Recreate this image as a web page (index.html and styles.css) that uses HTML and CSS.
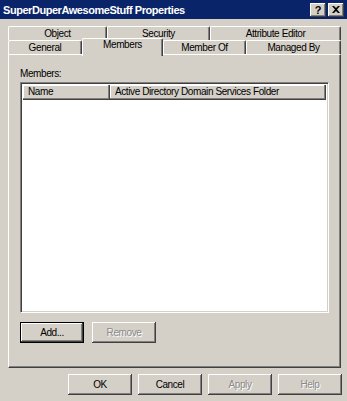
FILE: index.html
```html
<!DOCTYPE html>
<html>
<head>
<meta charset="utf-8">
<link rel="stylesheet" href="styles.css">
</head>
<body>
<div class="window">
  <div class="titlebar">
    <span class="title">SuperDuperAwesomeStuff Properties</span>
    <div class="tbtns">
      <span class="tbtn">?</span>
      <span class="tbtn close"><svg width="8" height="7" viewBox="0 0 8 7"><path d="M0 0h2l2 2 2-2h2L5 3.5 8 7H6L4 5 2 7H0l3-3.5z" fill="#000"/></svg></span>
    </div>
  </div>
  <div class="tabs">
    <div class="tabrow row1">
      <div class="tab">Object</div>
      <div class="tab">Security</div>
      <div class="tab">Attribute Editor</div>
    </div>
    <div class="tabrow row2">
      <div class="tab">General</div>
      <div class="tab sel">Members</div>
      <div class="tab">Member Of</div>
      <div class="tab">Managed By</div>
    </div>
  </div>
  <div class="panel">
    <div class="label">Members:</div>
    <div class="list">
      <div class="lhead">
        <div class="col c1">Name</div>
        <div class="col c2">Active Directory Domain Services Folder</div>
      </div>
      <div class="lbody"></div>
    </div>
    <div class="pbtns">
      <button class="btn def">Add...</button>
      <button class="btn dis">Remove</button>
    </div>
  </div>
  <div class="footer">
    <button class="btn">OK</button>
    <button class="btn">Cancel</button>
    <button class="btn dis">Apply</button>
    <button class="btn dis">Help</button>
  </div>
</div>
</body>
</html>
```
FILE: styles.css
```css
* { box-sizing: border-box; }
html, body { margin: 0; padding: 0; }
body {
  background: #d4d0c8;
  font-family: "Liberation Sans", sans-serif;
  font-size: 10px;
  letter-spacing: -0.4px;
  color: #000;
  width: 347px;
  height: 401px;
  overflow: hidden;
}
.window { width: 347px; height: 401px; position: relative; }
.titlebar {
  height: 19px;
  background: #0a246a;
  display: flex;
  align-items: center;
  justify-content: space-between;
  padding: 0 3px 0 3px;
}
.title {
  color: #fff;
  font-family: "Liberation Sans", sans-serif;
  font-weight: bold;
  font-size: 11px;
  letter-spacing: -0.45px;
}
.tbtns { display: flex; gap: 2px; }
.tbtn {
  width: 16px; height: 14px;
  background: #d4d0c8;
  box-shadow: inset -1px -1px #404040, inset 1px 1px #fff, inset -2px -2px #808080;
  font-family: "Liberation Sans", sans-serif;
  font-weight: bold;
  font-size: 11px;
  letter-spacing: 0;
  line-height: 14px;
  text-align: center;
  display: flex; align-items: center; justify-content: center;
}
.tabs { margin-top: 7px; padding-left: 8px; width: 341px; }
.tabrow { display: grid; height: 14px; }
.row1 { grid-template-columns: 99px 103px 131px; }
.row2 { grid-template-columns: 74px 81px 83px 95px; }
.tab {
  text-align: center;
  line-height: 13px;
  border-top: 1px solid #fff;
  border-left: 1px solid #fff;
  border-right: 1px solid #404040;
  box-shadow: inset -1px 0 #808080;
  border-radius: 2px 2px 0 0;
  height: 14px;
  background: #d4d0c8;
}
.tab.sel {
  position: relative;
  top: -2px;
  height: 18px;
  z-index: 2;
  line-height: 12px;
}
.panel {
  margin-left: 8px;
  width: 333px;
  height: 314px;
  border-top: 1px solid #fff;
  border-left: 1px solid #fff;
  border-right: 1px solid #404040;
  border-bottom: 1px solid #404040;
  box-shadow: inset -1px -1px #808080;
  padding: 12px 0 0 11px;
}
.label { height: 15px; line-height: 13px; }
.list {
  width: 309px;
  height: 231px;
  border-top: 1px solid #808080;
  border-left: 1px solid #808080;
  border-right: 1px solid #fff;
  border-bottom: 1px solid #fff;
  box-shadow: inset 1px 1px #404040, inset -1px -1px #d4d0c8;
  padding: 2px;
  background: #fff;
  display: flex;
  flex-direction: column;
}
.lhead { display: flex; height: 15px; background: #d4d0c8; }
.col {
  height: 15px;
  line-height: 14px;
  padding-left: 5px;
  box-shadow: inset -1px -1px #808080, inset 1px 1px #fff;
  border-right: 1px solid #404040;
  border-bottom: 1px solid #404040;
  white-space: nowrap;
  overflow: hidden;
}
.c1 { width: 87px; }
.c2 { flex: 1; }
.lbody { flex: 1; background: #fff; }
.pbtns { display: flex; gap: 8px; margin-top: 9px; }
.btn {
  width: 64px;
  height: 21px;
  background: #d4d0c8;
  border: none;
  padding: 0;
  margin: 0;
  font-family: "Liberation Sans", sans-serif;
  font-size: 10px;
  letter-spacing: -0.4px;
  color: #000;
  box-shadow: inset -1px -1px #404040, inset 1px 1px #fff, inset -2px -2px #808080;
}
.btn.def {
  border: 1px solid #000;
}
.btn.dis { color: #8a8a8a; text-shadow: 1px 1px #fff; }
.footer {
  display: flex;
  justify-content: flex-end;
  gap: 6px;
  padding-right: 5px;
  margin-top: 6px;
}
```
